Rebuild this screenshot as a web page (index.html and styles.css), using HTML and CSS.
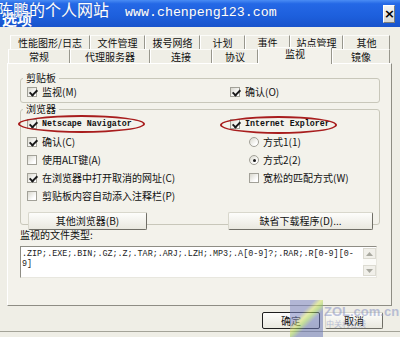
FILE: index.html
```html
<!doctype html>
<html lang="zh-CN">

<head>
  <meta charset="UTF-8" />
  <meta name="viewport" content="width=device-width, initial-scale=1" />
  <title>选项</title>
  <link rel="stylesheet" href="styles.css">
</head>

<body>
  <div class="dialog">
    <div class="titlebar">
      <span class="title">选项</span>
      <span class="site-mark">陈鹏的个人网站<span class="site-url">www.chenpeng123.com</span></span>
      <span class="close">×</span>
    </div>

    <!-- Tabs: two rows, the front row touches the panel -->
    <div class="tabs">
      <div class="tab-row back">
        <div class="tab w80">性能图形/日志</div>
        <div class="tab w55">文件管理</div>
        <div class="tab w55">拨号网络</div>
        <div class="tab w45">计划</div>
        <div class="tab w45">事件</div>
        <div class="tab w53">站点管理</div>
        <div class="tab w47">其他</div>
      </div>
      <div class="tab-row front">
        <div class="tab w62">常规</div>
        <div class="tab w80">代理服务器</div>
        <div class="tab w62">连接</div>
        <div class="tab w46">协议</div>
        <div class="tab w74 active">监视</div>
        <div class="tab w58">镜像</div>
      </div>
    </div>

    <div class="panel">
      <fieldset class="group clipboard">
        <legend>剪贴板</legend>
        <div class="grid">
          <label class="check"><span class="box on"></span>监视(M)</label>
          <label class="check"><span class="box on"></span>确认(O)</label>
        </div>
      </fieldset>

      <fieldset class="group browsers">
        <legend>浏览器</legend>
        <div class="grid">
          <label class="check"><span class="box on"></span><span class="mono">Netscape Navigator</span><span class="ring ring-ns"></span></label>
          <label class="check"><span class="box on"></span><span class="mono">Internet Explorer</span><span class="ring ring-ie"></span></label>

          <label class="check"><span class="box on"></span>确认(C)</label>
          <label class="check indent"><span class="radio"></span>方式1(1)</label>

          <label class="check"><span class="box"></span>使用ALT键(A)</label>
          <label class="check indent"><span class="radio on"></span>方式2(2)</label>

          <label class="check"><span class="box on"></span>在浏览器中打开取消的网址(C)</label>
          <label class="check indent"><span class="box"></span>宽松的匹配方式(W)</label>

          <label class="check"><span class="box"></span>剪贴板内容自动添入注释栏(P)</label>
          <span></span>

          <button class="btn btn-other">其他浏览器(B)</button>
          <button class="btn btn-download">缺省下载程序(D)...</button>
        </div>
      </fieldset>

      <div class="files-label">监视的文件类型:</div>
      <div class="files">
        <div class="files-text">.ZIP;.EXE;.BIN;.GZ;.Z;.TAR;.ARJ;.LZH;.MP3;.A[0-9]?;.RAR;.R[0-9][0-<br>9]</div>
        <div class="scrollbar">
          <span class="arrow"><svg width="7" height="4" viewBox="0 0 7 4"><polygon points="0,4 3.5,0 7,4" fill="#a9a9a0"/></svg></span>
          <span class="track"></span>
          <span class="arrow"><svg width="7" height="4" viewBox="0 0 7 4"><polygon points="0,0 3.5,4 7,0" fill="#a9a9a0"/></svg></span>
        </div>
      </div>
    </div>

    <div class="footer">
      <button class="btn btn-ok">确定</button>
      <button class="btn btn-cancel">取消</button>
    </div>

    <!-- ZOL watermark over the corner -->
    <div class="zol">
      <span class="zol-logo"></span>
      <span class="zol-text">ZOL.com.cn<span class="zol-sub">中关村在线</span></span>
    </div>
  </div>
</body>

</html>
```

FILE: styles.css
```css
* {
  box-sizing: border-box;
}

body {
  margin: 0;
  background: #efeee6;
}

.dialog {
  position: relative;
  width: 400px;
  height: 337px;
  overflow: hidden;
  background: #efeee6;
  font-family: "Noto Sans CJK SC", "Noto Sans", sans-serif;
  font-size: 10px;
  line-height: 12px;
  color: #111;
}

/* Title bar */
.titlebar {
  position: relative;
  display: flex;
  align-items: flex-start;
  height: 27px;
  background: linear-gradient(#4a8cf4, #2468e6 14%, #1d5fdc 60%, #1853cc);
  color: #fff;
}

.title {
  padding: 10px 0 0 2px;
  font-size: 15px;
  line-height: 17px;
  font-weight: bold;
}

.site-mark {
  position: absolute;
  left: -3px;
  top: 0;
  font-size: 16px;
  line-height: 18px;
  white-space: nowrap;
  text-shadow: 0 0 1px #3a5fb0;
}

.site-url {
  margin-left: 16px;
  font-family: "Liberation Mono", monospace;
  font-size: 13.3px;
}

.close {
  margin: 5px 5px 0 auto;
  width: 12px;
  height: 18px;
  background: linear-gradient(#f4f4f2, #d8d8d2);
  border: 1px solid;
  border-color: #fff #7d7d78 #7d7d78 #fff;
  color: #000;
  font-family: "DejaVu Sans", sans-serif;
  font-size: 13px;
  font-weight: bold;
  line-height: 15px;
  text-align: center;
}

/* Tabs */
.tabs {
  margin-top: 8px;
}

.tab-row {
  display: flex;
  height: 14px;
}

.tab-row.back {
  padding-left: 10px;
}

.tab-row.front {
  padding-left: 8px;
}

.tab {
  flex: none;
  height: 14px;
  line-height: 14px;
  text-align: center;
  border-left: 1px solid #fff;
  border-right: 1px solid #97968c;
  border-top: 1px solid #fbfbf8;
}

.tab.active {
  position: relative;
  z-index: 1;
  height: 17px;
  margin-top: -2px;
  line-height: 12px;
  background: #f3f2eb;
}

.w45 { width: 45px; }
.w46 { width: 46px; }
.w47 { width: 47px; }
.w53 { width: 53px; }
.w55 { width: 55px; }
.w58 { width: 58px; }
.w62 { width: 62px; }
.w74 { width: 74px; }
.w80 { width: 80px; }

/* Panel */
.panel {
  margin: 0 8px 0 7px;
  height: 243px;
  padding: 0 11px 0 12px;
  background: #f3f2eb;
  border: 1px solid;
  border-color: #fff #8e8d84 #8e8d84 #fff;
}

.group {
  margin: 0;
  min-width: 0;
  border: 1px solid #c8c7ba;
  border-radius: 3px;
}

.group legend {
  margin-left: -4px;
  padding: 0 3px;
  line-height: 12px;
}

.clipboard {
  margin-top: 8px;
  padding: 2px 6px 4px;
}

.clipboard .grid {
  grid-auto-rows: 12px;
}

.browsers {
  padding: 0 6px 1px;
}

.browsers .grid {
  grid-auto-rows: 18px;
}

.grid {
  display: grid;
  grid-template-columns: 203px 1fr;
}

.check {
  position: relative;
  display: flex;
  align-items: center;
  gap: 5px;
  white-space: nowrap;
}

.check.indent {
  margin-left: 19px;
  gap: 4px;
}

.box,
.radio {
  position: relative;
  flex: none;
  width: 10px;
  height: 10px;
  border: 1px solid #a2a198;
  background: linear-gradient(135deg, #d9d8ce, #fff 75%);
}

.box.on::after {
  content: "";
  position: absolute;
  left: 2.5px;
  top: 0;
  width: 3px;
  height: 6px;
  border: solid #1a1a1a;
  border-width: 0 2px 2px 0;
  transform: rotate(45deg);
}

.radio {
  border-radius: 50%;
}

.radio.on::after {
  content: "";
  position: absolute;
  left: 2.5px;
  top: 2.5px;
  width: 3px;
  height: 3px;
  border-radius: 50%;
  background: #1a1a1a;
}

.mono {
  font-family: "Liberation Mono", monospace;
  font-size: 8.3px;
  font-weight: bold;
}

.ring {
  position: absolute;
  top: 0;
  height: 18px;
  border: 2px solid #a81d1d;
  border-radius: 50%;
}

.ring-ns {
  left: -9px;
  width: 127px;
}

.ring-ie {
  left: -10px;
  top: 1px;
  width: 117px;
}

.btn {
  height: 18px;
  padding: 0;
  font: inherit;
  color: #111;
  background: linear-gradient(#fdfdfb, #e9e8df);
  border: 1px solid;
  border-color: #d8d7cc #6f6e66 #6f6e66 #d8d7cc;
  border-radius: 2px;
}

.btn-other {
  margin: 7px 0 -7px 1px;
  width: 119px;
}

.btn-download {
  margin: 7px 0 -7px -2px;
  width: 145px;
}

/* File types box */
.files-label {
  margin-top: 4px;
}

.files {
  display: flex;
  margin-top: 5px;
  height: 32px;
  width: 357px;
  background: #fff;
  border: 1px solid;
  border-color: #8e8d84 #e8e7df #e8e7df #8e8d84;
}

.files-text {
  flex: 1;
  padding: 2px 0 0 1px;
  font-family: "Liberation Mono", monospace;
  font-size: 8.4px;
  line-height: 10px;
  color: #222;
  white-space: nowrap;
}

.scrollbar {
  display: flex;
  flex-direction: column;
  width: 13px;
  padding: 1px 0;
}

.arrow {
  display: flex;
  align-items: center;
  justify-content: center;
  height: 11px;
  background: #f1f0ea;
  border: 1px solid #dcdbd2;
}

.track {
  flex: 1;
  background: #fbfbf8;
}

/* Bottom buttons */
.footer {
  display: flex;
  justify-content: flex-end;
  gap: 5px;
  height: 26px;
  padding: 6px 17px 0 0;
  border-bottom: 1px solid #a4a398;
}

.btn-ok,
.btn-cancel {
  width: 58px;
  height: 17px;
}

.btn-ok {
  border-color: #1e1e1e;
}

.zol {
  position: absolute;
  left: 290px;
  top: 300px;
  display: flex;
  opacity: 0.55;
}

.zol-logo {
  width: 33px;
  height: 37px;
  background: linear-gradient(135deg, #7e86c4 35%, #d8e46a 45%, #9fd05a 52%, #6b78b8 62%);
}

.zol-text {
  display: flex;
  flex-direction: column;
  margin: 6px 0 0 1px;
  font-family: "Liberation Sans", sans-serif;
  font-size: 13px;
  line-height: 12px;
  font-weight: bold;
  color: #8b95c4;
}

.zol-sub {
  margin-left: 2px;
  font-family: "Noto Sans CJK SC", sans-serif;
  font-size: 8px;
  line-height: 11px;
  font-weight: normal;
}
```
